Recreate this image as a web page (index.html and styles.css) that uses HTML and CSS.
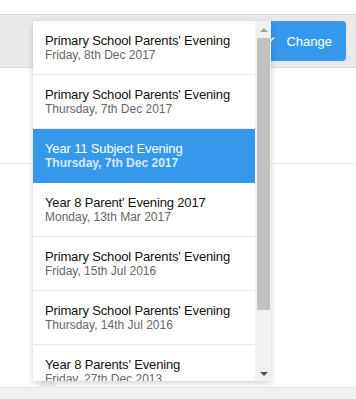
FILE: index.html
```html
<!DOCTYPE html>
<html>
<head>
<meta charset="utf-8">
<link rel="stylesheet" href="styles.css">
</head>
<body>
<div class="page">
  <div class="topstrip"></div>
  <header class="toolbar">
    <button class="btn-change">
      <svg class="btn-icon" width="12" height="12" viewBox="0 0 12 12"><path d="M1.5 6.5 L4.5 9.5 L10.5 3" fill="none" stroke="#fff" stroke-width="1.8" stroke-linecap="round" stroke-linejoin="round"/></svg>
      <span>Change</span>
    </button>
  </header>
  <main class="content">
    <section class="card card-side"><div class="card-row"></div></section>
    <section class="card card-main"><div class="card-row"></div></section>
  </main>

  <div class="dropdown">
    <ul class="list">
      <li class="item"><div class="title">Primary School Parents' Evening</div><div class="date">Friday, 8th Dec 2017</div></li>
      <li class="item"><div class="title">Primary School Parents' Evening</div><div class="date">Thursday, 7th Dec 2017</div></li>
      <li class="item selected"><div class="title">Year 11 Subject Evening</div><div class="date">Thursday, 7th Dec 2017</div></li>
      <li class="item"><div class="title">Year 8 Parent' Evening 2017</div><div class="date">Monday, 13th Mar 2017</div></li>
      <li class="item"><div class="title">Primary School Parents' Evening</div><div class="date">Friday, 15th Jul 2016</div></li>
      <li class="item"><div class="title">Primary School Parents' Evening</div><div class="date">Thursday, 14th Jul 2016</div></li>
      <li class="item"><div class="title">Year 8 Parents' Evening</div><div class="date">Friday, 27th Dec 2013</div></li>
    </ul>
    <div class="scrollbar">
      <div class="sb-btn"><span class="arrow-up"></span></div>
      <div class="sb-track"><div class="sb-thumb"></div></div>
      <div class="sb-btn"><span class="arrow-down"></span></div>
    </div>
  </div>
</div>
</body>
</html>
```
FILE: styles.css
```css
* { box-sizing: border-box; }
html, body { margin: 0; padding: 0; }
body {
  font-family: "Liberation Sans", Arial, sans-serif;
  background: #f0f1f3;
  width: 356px;
  height: 399px;
  overflow: hidden;
}
.page {
  position: relative;
  width: 356px;
  height: 399px;
  display: flex;
  flex-direction: column;
}
.topstrip {
  height: 14px;
  background: #fff;
}
.toolbar {
  height: 54px;
  background: #e9e9eb;
  border-top: 1px solid #d2d2d4;
  border-bottom: 1px solid #d8d8da;
  display: flex;
  justify-content: flex-end;
  align-items: flex-start;
  padding: 6px 10px 0 0;
}
.btn-change {
  height: 40px;
  background: #3598ea;
  border: none;
  border-radius: 4px;
  color: #fff;
  font-family: "Liberation Sans", Arial, sans-serif;
  font-size: 13px;
  display: flex;
  align-items: center;
  padding: 0 14px 0 12px;
}
.btn-icon { margin-right: 11px; }
.content {
  display: flex;
  gap: 14px;
  height: 319px;
}
.card {
  background: #fff;
  box-shadow: 0 1px 1px rgba(0,0,0,0.06);
}
.card-side { width: 41px; border-radius: 0 0 4px 0; }
.card-main { flex: 1; border-radius: 0 0 0 4px; }
.card-row {
  height: 96px;
  border-bottom: 1px solid #ededed;
}

.dropdown {
  position: absolute;
  left: 33px;
  top: 21px;
  width: 238px;
  height: 360px;
  background: #fff;
  display: flex;
  overflow: hidden;
  box-shadow: 0 2px 6px rgba(0,0,0,0.18);
}
.list {
  list-style: none;
  margin: 0;
  padding: 0;
  width: 222px;
  flex: none;
}
.item {
  height: 54px;
  padding: 12px 12px 0 12px;
  border-bottom: 1px solid #e9e9e9;
}
.title {
  font-size: 13px;
  line-height: 15px;
  letter-spacing: -0.15px;
  color: #111;
  white-space: nowrap;
}
.date {
  font-size: 12px;
  line-height: 14px;
  color: #666;
  white-space: nowrap;
}
.item.selected {
  background: #3598ea;
  border-bottom-color: #3598ea;
}
.item.selected .title { color: #fff; }
.item.selected .date { color: #d8eafb; font-weight: bold; }

.scrollbar {
  width: 16px;
  flex: none;
  background: #f1f1f1;
  display: flex;
  flex-direction: column;
}
.sb-btn {
  height: 17px;
  display: flex;
  align-items: center;
  justify-content: center;
  padding-left: 1px;
}
.sb-track {
  flex: 1;
  padding: 0 1px 0 2px;
}
.sb-thumb {
  height: 272px;
  background: #c1c1c1;
}
.arrow-up {
  width: 0; height: 0;
  border-left: 4px solid transparent;
  border-right: 4px solid transparent;
  border-bottom: 4px solid #a3a3a3;
}
.arrow-down {
  width: 0; height: 0;
  border-left: 4px solid transparent;
  border-right: 4px solid transparent;
  border-top: 4px solid #505050;
  margin-top: 2px;
}
```
